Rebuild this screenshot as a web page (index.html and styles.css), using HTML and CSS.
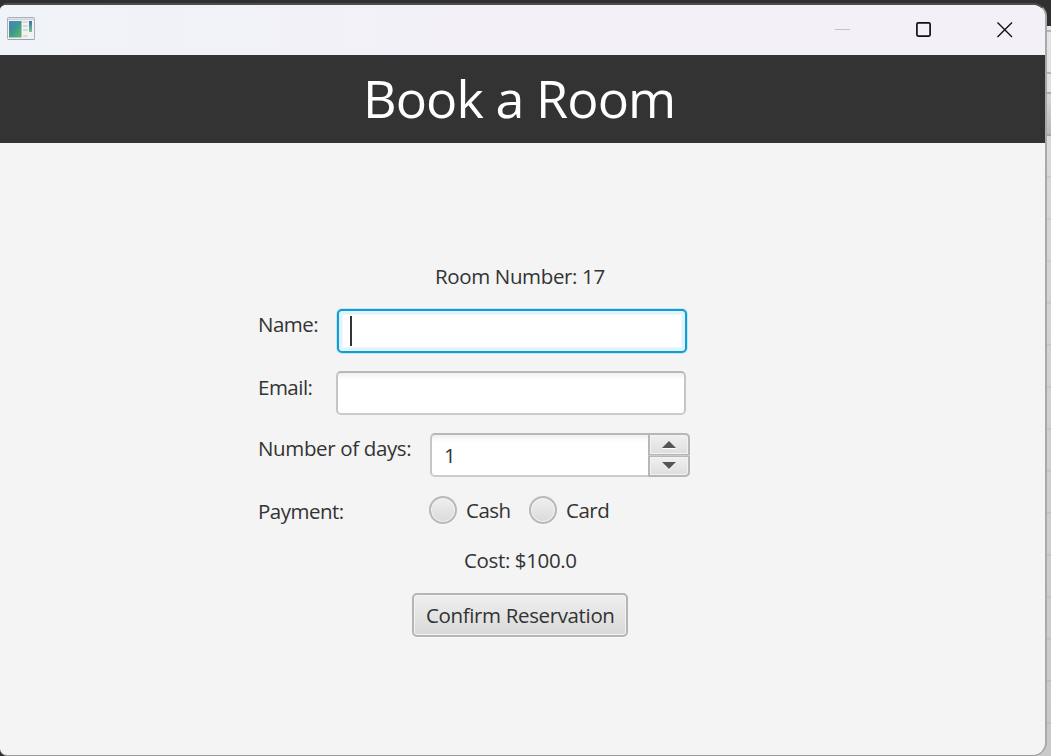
FILE: index.html
```
<!DOCTYPE html>
<html lang="en">
<head>
<meta charset="utf-8">
<title>Book a Room</title>
<link rel="stylesheet" href="styles.css">
</head>
<body>
<div class="backdrop"></div>
<main class="window">
  <div class="titlebar">
    <svg class="app-icon" width="28" height="24" viewBox="0 0 28 24">
      <defs>
        <linearGradient id="pane" x1="0" y1="0" x2="1" y2="1"><stop offset="0" stop-color="#3d7fae"/><stop offset=".5" stop-color="#3f9a8c"/><stop offset="1" stop-color="#62b865"/></linearGradient>
        <linearGradient id="strip" x1="0" y1="0" x2="0" y2="1"><stop offset="0" stop-color="#3672a4"/><stop offset="1" stop-color="#79c587"/></linearGradient>
      </defs>
      <rect x=".5" y=".5" width="27" height="22" rx="1" fill="#f1f2f3" stroke="#abafb7"/>
      <path d="M1 1.5H27V3H1Z" fill="#cdd3de"/>
      <path d="M1 22.5H27.5" stroke="#9da1a8"/>
      <rect x="2" y="4" width="12.5" height="16.5" fill="url(#pane)"/>
      <path d="M2 9Q9 9 14.5 5V4H2Z" fill="#4b8fbd" opacity=".5"/>
      <path d="M16 5h4.5M16 9h4.5M16 13h4.5M16 19h4.5" stroke="#d6d8da" stroke-width="2"/>
      <rect x="22" y="4" width="3" height="11" fill="url(#strip)"/>
    </svg>
    <div class="controls">
      <svg width="16" height="16" viewBox="0 0 16 16"><path d="M0 7.5H15" stroke="#c3c0c8"/></svg>
      <svg width="16" height="16" viewBox="0 0 16 16"><rect x=".9" y=".9" width="13.2" height="13.2" rx="1.3" fill="none" stroke="#101014" stroke-width="1.7"/></svg>
      <svg width="16" height="16" viewBox="0 0 16 16"><path d="M.5 .5L15 15M15 .5L.5 15" stroke="#101014" stroke-width="1.4"/></svg>
    </div>
  </div>
  <header class="banner"><h1>Book a Room</h1></header>
  <form class="form">
    <div class="row room"><span>Room Number: 17</span></div>
    <div class="row name"><label>Name:</label><div class="field focused"><span class="caret"></span></div></div>
    <div class="row email"><label>Email:</label><div class="field"></div></div>
    <div class="row days"><label>Number of days:</label>
      <div class="spinner"><div class="value">1</div>
        <div class="arrows">
          <div class="arrow"><svg width="14" height="8" viewBox="0 0 14 8"><path d="M0 8L7 1L14 8Z" fill="#fff"/><path d="M0 7L7 0L14 7Z" fill="#555"/></svg></div>
          <div class="arrow"><svg width="14" height="8" viewBox="0 0 14 8"><path d="M0 1L7 8L14 1Z" fill="#fff"/><path d="M0 0H14L7 7Z" fill="#555"/></svg></div>
        </div>
      </div>
    </div>
    <div class="row payment"><label>Payment:</label>
      <div class="radio"><i></i><span>Cash</span></div>
      <div class="radio"><i></i><span>Card</span></div>
    </div>
    <div class="row cost"><span>Cost: $100.0</span></div>
    <div class="row submit"><button type="button">Confirm Reservation</button></div>
  </form>
</main>
</body>
</html>
```
FILE: styles.css
```
* { box-sizing: border-box; }
body {
  margin: 0;
  padding-top: 1px;
  width: 1051px;
  height: 756px;
  overflow: hidden;
  position: relative;
  background: #303030;
  color: #333;
  font: 20.5px/28px "Open Sans", "Noto Sans", sans-serif;
  letter-spacing: -.36px;
  white-space: nowrap;
}
.backdrop {
  position: absolute;
  top: 26px;
  right: 0;
  width: 20px;
  height: 730px;
  background:
    linear-gradient(#b4b4b4, #b4b4b4) 0 4px / 100% 2px no-repeat,
    linear-gradient(#b4b4b4, #b4b4b4) 0 46px / 100% 2px no-repeat,
    linear-gradient(#acacac, #acacac) 0 66px / 100% 2px no-repeat,
    linear-gradient(#d8d8d8, #b9b9b9) 0 68px / 100% 40px no-repeat,
    linear-gradient(#a6a6a6, #a6a6a6) 0 108px / 100% 2px no-repeat,
    linear-gradient(#e4e4e4, #dedede) 0 0 / 100% 108px no-repeat,
    repeating-linear-gradient(transparent 0 24px, rgba(0,0,0,.06) 24px 26px, transparent 26px 42px),
    linear-gradient(#e4e4e4, #d6d6d6 25%, #c9c9c9);
}
.window {
  position: relative;
  width: 1047px;
  height: 753px;
  margin-top: 2px;
  display: flex;
  flex-direction: column;
  border: solid;
  border-width: 2px 2px 1px 0;
  border-color: #4d4d4d #a9a9a9 #9c9c9c;
  border-radius: 7px 14px 14px 7px;
  overflow: hidden;
  background: #f4f4f4;
}
.titlebar {
  height: 50px;
  flex: none;
  display: flex;
  justify-content: space-between;
  padding: 12px 32px 0 7px;
  background: linear-gradient(90deg, #f0f3f9, #f3f0f8 45%);
}
.controls { display: flex; gap: 65px; padding-top: 5px; }
.banner {
  height: 88px;
  flex: none;
  background: #333;
  color: #fff;
  padding-left: 363px;
}
h1 { margin: 0; font-size: 52px; line-height: 86px; font-weight: 400; letter-spacing: -.9px; }
.form { padding: 119px 0 0 258px; }
.row { display: flex; height: 44px; align-items: flex-start; }
.room { height: 28px; padding-left: 177px; }
.name { margin-top: 19px; }
.email, .days { margin-top: 18px; }
.name label { width: 79px; padding-top: 1px; letter-spacing: -.5px; }
.email label { width: 78px; padding-top: 2px; letter-spacing: -.5px; }
.days label { width: 172px; padding-top: 1px; }
.payment { height: 28px; margin-top: 19px; letter-spacing: -.5px; }
.payment label { width: 171px; padding-top: 1px; }
.cost { height: 28px; margin-top: 22px; padding-left: 206px; }
.submit { margin-top: 19px; padding-left: 154px; }
.field {
  width: 350px;
  height: 44px;
  border: 2px solid;
  border-color: #b8b8b8 #c5c5c5 #cbcbcb;
  border-radius: 5px;
  background: linear-gradient(#f0f0f0, #fff 7px);
}
.focused {
  padding: 5px 0 0 11px;
  border-color: #0c9ed5;
  background: #fff;
  box-shadow: 0 0 0 1px #c8e4ef, inset 0 0 0 3.5px #e0f2fa;
}
.caret { display: block; width: 2px; height: 30px; background: #333; }
.spinner { display: flex; width: 260px; height: 44px; }
.value {
  width: 218px;
  border: 2px solid;
  border-right: 0;
  border-color: #b8b8b8 #c5c5c5 #cbcbcb;
  border-radius: 5px 0 0 5px;
  background: linear-gradient(#f0f0f0, #fff 7px);
  padding: 6px 0 0 12px;
}
.arrows { width: 42px; display: flex; flex-direction: column; gap: 1px; background: #ccc; border-radius: 0 5px 5px 0; }
.arrow {
  height: 22px;
  border: 2px solid #b7b7b7;
  border-bottom-width: 1px;
  border-radius: 0 5px 0 0;
  background: linear-gradient(#f0f0f0, #dedede);
  box-shadow: inset 0 0 0 1px #f2f2f2;
  display: flex;
  align-items: center;
  justify-content: center;
}
.arrow + .arrow { height: 21px; border-width: 1px 2px 2px; border-radius: 0 0 5px 0; }
.radio { display: flex; width: 100px; }
.radio i {
  width: 28px;
  height: 28px;
  margin-right: 9px;
  border: 2px solid #b9b9b9;
  border-radius: 50%;
  background: linear-gradient(#efefef, #dadada);
  box-shadow: inset 0 0 0 1px #f3f3f3, 0 1px 0 #fafafa;
}
button {
  width: 216px;
  height: 44px;
  padding: 0 0 0 12px;
  border: 2px solid #b5b5b5;
  border-radius: 5px;
  background: linear-gradient(#efefef, #d9d9d9);
  box-shadow: inset 0 0 0 1px #f3f3f3, 0 1px 0 #fafafa;
  font: inherit;
  letter-spacing: inherit;
  color: inherit;
  text-align: left;
}
```
